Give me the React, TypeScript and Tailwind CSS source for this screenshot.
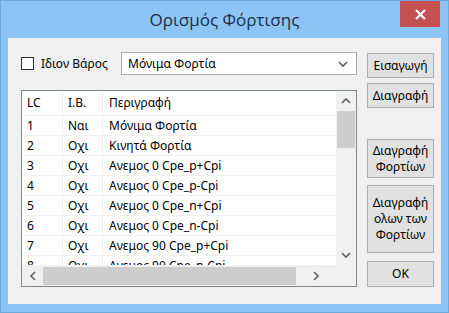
import React from 'react'

const ROWS = [
  { lc: '1', ib: 'Ναι', desc: 'Μόνιμα Φορτία' },
  { lc: '2', ib: 'Οχι', desc: 'Κινητά Φορτία' },
  { lc: '3', ib: 'Οχι', desc: 'Ανεμος 0 Cpe_p+Cpi' },
  { lc: '4', ib: 'Οχι', desc: 'Ανεμος 0 Cpe_p-Cpi' },
  { lc: '5', ib: 'Οχι', desc: 'Ανεμος 0 Cpe_n+Cpi' },
  { lc: '6', ib: 'Οχι', desc: 'Ανεμος 0 Cpe_n-Cpi' },
  { lc: '7', ib: 'Οχι', desc: 'Ανεμος 90 Cpe_p+Cpi' },
  { lc: '8', ib: 'Οχι', desc: 'Ανεμος 90 Cpe_n-Cpi' },
]

function Chevron({ dir }: { dir: 'up' | 'down' | 'left' | 'right' }) {
  const pts = {
    up: '1,6 5,2 9,6',
    down: '1,2 5,6 9,2',
    left: '6,1 2,5 6,9',
    right: '2,1 6,5 2,9',
  }[dir]
  const horiz = dir === 'left' || dir === 'right'
  return (
    <svg width={horiz ? 8 : 10} height={horiz ? 10 : 8} viewBox={horiz ? '0 0 8 10' : '0 0 10 8'}>
      <polyline points={pts} fill="none" stroke="#606060" strokeWidth="1.6" />
    </svg>
  )
}

function Btn({ children, className = '' }: { children: React.ReactNode; className?: string }) {
  return (
    <button
      className={`flex w-[67px] items-center justify-center border border-[#adadad] bg-[#e1e1e1] text-center text-[12px] leading-[16px] text-black ${className}`}
    >
      {children}
    </button>
  )
}

export default function App() {
  return (
    <div
      className="flex h-[313px] w-[449px] flex-col border border-[#6fa8dc] bg-[#8cc4f4] text-black"
      style={{ fontFamily: '"Noto Sans", "Open Sans", sans-serif' }}
    >
      <div className="relative flex h-[37px] items-center justify-center">
        <span className="text-[17px] text-[#1b2f48]" style={{ fontFamily: '"Open Sans", sans-serif' }}>
          Ορισμός Φόρτισης
        </span>
        <div className="absolute right-[8px] top-0 flex h-[26px] w-[40px] items-center justify-center bg-[#c75050]">
          <svg width="11" height="11" viewBox="0 0 11 11">
            <path d="M1 1 L10 10 M10 1 L1 10" stroke="#fff" strokeWidth="2.2" />
          </svg>
        </div>
      </div>

      <div className="mx-[7px] flex h-[266px] bg-[#f0f0f0]">
        <div className="flex w-[349px] flex-col pl-[13px] pt-[14px]">
          <div className="flex h-[23px] items-center">
            <div className="h-[13px] w-[13px] border border-[#333] bg-white" />
            <span className="ml-[7px] text-[12px]">Ιδιον Βάρος</span>
            <div className="ml-auto flex h-[23px] w-[236px] items-center justify-between border border-[#acacac] bg-white pl-[6px] pr-[8px]">
              <span className="text-[12px]">Μόνιμα Φορτία</span>
              <Chevron dir="down" />
            </div>
          </div>

          <div className="mt-[15px] flex h-[197px] flex-col border border-[#828790] bg-white">
            <div className="flex h-[174px]">
              <div className="flex-1 overflow-hidden text-[12px]">
                <div className="flex h-[25px] items-center border-b border-[#f0f0f0]">
                  <div className="w-[41px] border-r border-[#f0f0f0] pl-[5px] leading-[24px]">LC</div>
                  <div className="w-[40px] border-r border-[#f0f0f0] pl-[5px] leading-[24px]">I.B.</div>
                  <div className="pl-[6px]">Περιγραφή</div>
                </div>
                {ROWS.map((r) => (
                  <div key={r.lc} className="flex h-[20px] items-center border-b border-[#f0f0f0]">
                    <div className="w-[41px] border-r border-[#f0f0f0] pl-[5px] leading-[19px]">{r.lc}</div>
                    <div className="w-[40px] border-r border-[#f0f0f0] pl-[5px] leading-[19px]">{r.ib}</div>
                    <div className="whitespace-nowrap pl-[6px]">{r.desc}</div>
                  </div>
                ))}
              </div>
              <div className="flex w-[20px] flex-col items-center bg-[#f0f0f0]">
                <div className="flex h-[20px] items-center">
                  <Chevron dir="up" />
                </div>
                <div className="h-[37px] w-[18px] bg-[#cdcdcd]" />
                <div className="mt-auto flex h-[20px] items-center">
                  <Chevron dir="down" />
                </div>
              </div>
            </div>
            <div className="flex h-[21px]">
              <div className="flex flex-1 items-center bg-[#f0f0f0]">
                <div className="flex w-[21px] justify-center">
                  <Chevron dir="left" />
                </div>
                <div className="h-[18px] w-[253px] bg-[#cdcdcd]" />
                <div className="flex flex-1 justify-center">
                  <Chevron dir="right" />
                </div>
              </div>
              <div className="w-[20px] bg-[#f0f0f0]" />
            </div>
          </div>
        </div>

        <div className="ml-[10px] flex flex-col pt-[15px]">
          <Btn className="h-[25px]">Εισαγωγή</Btn>
          <Btn className="mt-[5px] h-[25px]">Διαγραφή</Btn>
          <Btn className="mt-[31px] h-[39px]">
            Διαγραφή
            <br />
            Φορτίων
          </Btn>
          <Btn className="mt-[7px] h-[68px]">
            Διαγραφή
            <br />
            ολων των
            <br />
            Φορτίων
          </Btn>
          <Btn className="mt-[8px] h-[26px] border-[#3c7fb1]">OK</Btn>
        </div>
      </div>
    </div>
  )
}
